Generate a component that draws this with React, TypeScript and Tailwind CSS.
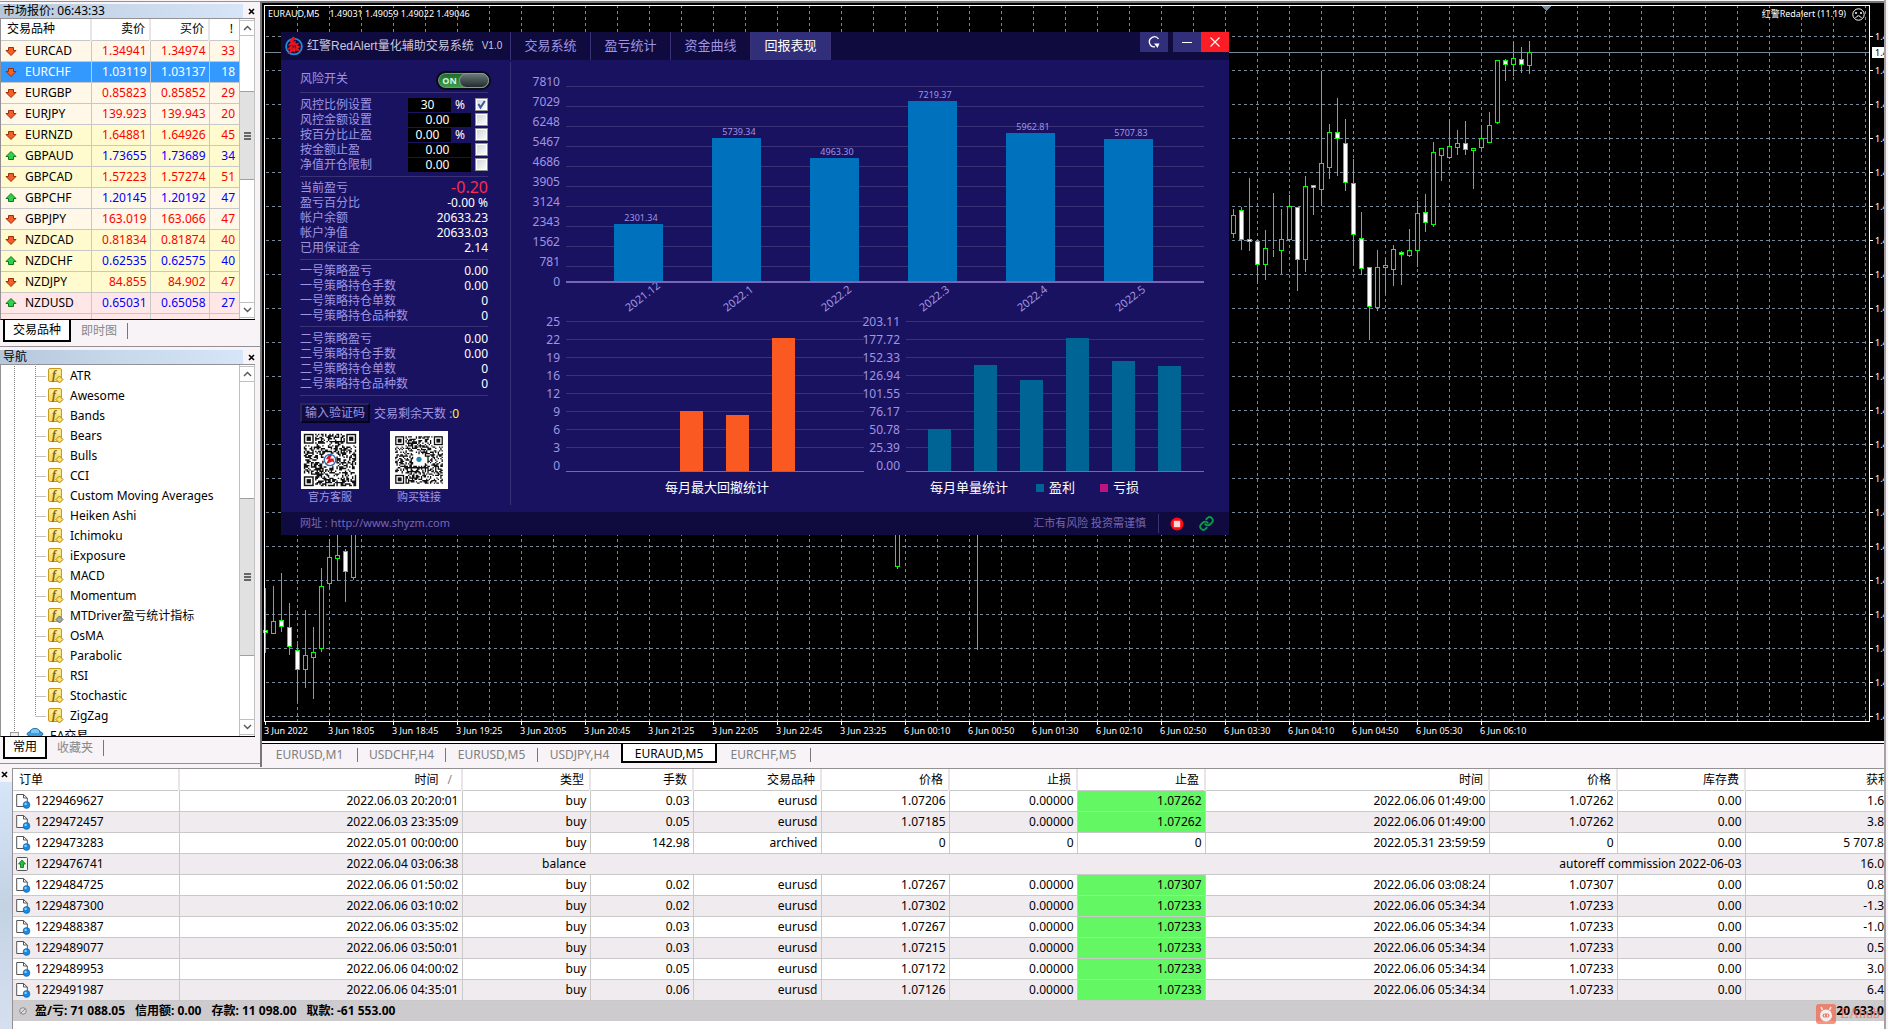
import React, { useState } from "react";

const SANS = "font-['Noto_Sans','Noto_Sans_CJK_SC',sans-serif]";

/* ---------- market watch data ---------- */

type Quote = [string, "up" | "down", string, string, string, string];

const quotes: Quote[] = [
  ["EURCAD", "down", "1.34941", "1.34974", "33", "bg-[#fff7e7]"],
  ["EURCHF", "down", "1.03119", "1.03137", "18", "bg-[#3399ff]"],
  ["EURGBP", "down", "0.85823", "0.85852", "29", "bg-[#fff7e7]"],
  ["EURJPY", "down", "139.923", "139.943", "20", "bg-[#fff7e7]"],
  ["EURNZD", "down", "1.64881", "1.64926", "45", "bg-[#fffbce]"],
  ["GBPAUD", "up", "1.73655", "1.73689", "34", "bg-[#fffbce]"],
  ["GBPCAD", "down", "1.57223", "1.57274", "51", "bg-[#fffbce]"],
  ["GBPCHF", "up", "1.20145", "1.20192", "47", "bg-[#fff7e7]"],
  ["GBPJPY", "down", "163.019", "163.066", "47", "bg-[#fff7e7]"],
  ["NZDCAD", "down", "0.81834", "0.81874", "40", "bg-[#fffbce]"],
  ["NZDCHF", "up", "0.62535", "0.62575", "40", "bg-[#fffbce]"],
  ["NZDJPY", "down", "84.855", "84.902", "47", "bg-[#fffbce]"],
  ["NZDUSD", "up", "0.65031", "0.65058", "27", "bg-[#ffe7e7]"],
  ["USDCAD", "down", "1.25888", "1.25928", "38", "bg-[#ffe7e7]"],
];

const indicators = [
  "ATR", "Awesome", "Bands", "Bears", "Bulls", "CCI", "Custom Moving Averages", "Heiken Ashi", "Ichimoku",
  "iExposure", "MACD", "Momentum", "MTDriver盈亏统计指标", "OsMA", "Parabolic", "RSI", "Stochastic", "ZigZag",
];

/* ---------- price chart data: x, high, body top, body bottom, low, filled ---------- */

type Candle = [number, number, number, number, number, number];

const recent: number[][] = [
  [627, 645, 702, 713, 0], [621, 630, 720, 750, 1], [534, 717, 726, 753, 1], [717, 723, 795, 852, 1],
  [690, 744, 795, 840, 0], [579, 747, 750, 771, 0], [627, 717, 753, 823, 0], [585, 618, 720, 725, 0],
  [621, 621, 780, 873, 1], [528, 558, 780, 816, 0], [555, 555, 564, 645, 1], [213, 489, 570, 617, 0],
  [372, 396, 504, 537, 0], [294, 396, 417, 528, 1], [357, 429, 549, 573, 1], [477, 549, 705, 796, 1],
  [636, 714, 807, 825, 1], [801, 801, 921, 1020, 1], [750, 801, 924, 933, 0], [776, 795, 804, 883, 0],
  [735, 747, 810, 858, 0], [753, 756, 765, 855, 1], [687, 750, 768, 771, 0], [603, 639, 753, 801, 0],
  [582, 636, 669, 696, 1], [426, 456, 675, 681, 0], [444, 444, 468, 543, 0], [357, 438, 474, 477, 0],
  [390, 429, 444, 465, 0], [363, 429, 450, 465, 1], [444, 444, 453, 567, 0], [375, 414, 444, 447, 0],
  [336, 375, 429, 429, 0], [180, 180, 369, 372, 0], [177, 180, 195, 243, 1], [126, 174, 195, 228, 0],
  [141, 177, 195, 219, 1], [123, 156, 198, 222, 0],
];

const early: number[][] = [
  [204, 330, 339, 399, 1], [198, 303, 342, 342, 0], [159, 300, 321, 336, 1], [249, 321, 381, 405, 1],
  [372, 390, 450, 547, 1], [270, 405, 450, 504, 0], [321, 396, 414, 537, 0], [144, 198, 387, 396, 0],
  [57, 111, 192, 207, 0], [0, 105, 117, 182, 0], [87, 93, 156, 246, 1], [0, 0, 174, 180, 0],
];

const scale = (rows: number[][], x0: number, y0: number): Candle[] =>
  rows.map((r, i) => [
    x0 + i * 8,
    Math.round(y0 + r[0] / 3),
    Math.round(y0 + r[1] / 3),
    Math.round(y0 + r[2] / 3),
    Math.round(y0 + r[3] / 3),
    r[4],
  ]);

const candles: Candle[] = [
  ...scale(recent, 1233, 0),
  ...scale(early, 265, 520),
  [897, 500, 510, 567, 569, 0],
  [977, 500, 510, 520, 650, 0],
];

const times = [
  "3 Jun 2022", "3 Jun 18:05", "3 Jun 18:45", "3 Jun 19:25", "3 Jun 20:05", "3 Jun 20:45", "3 Jun 21:25",
  "3 Jun 22:05", "3 Jun 22:45", "3 Jun 23:25", "6 Jun 00:10", "6 Jun 00:50", "6 Jun 01:30", "6 Jun 02:10",
  "6 Jun 02:50", "6 Jun 03:30", "6 Jun 04:10", "6 Jun 04:50", "6 Jun 05:30", "6 Jun 06:10",
];

/* ---------- account history ---------- */

const orders: string[][] = [
  ["1229469627", "2022.06.03 20:20:01", "buy", "0.03", "eurusd", "1.07206", "0.00000", "1.07262", "2022.06.06 01:49:00", "1.07262", "0.00", "1.6"],
  ["1229472457", "2022.06.03 23:35:09", "buy", "0.05", "eurusd", "1.07185", "0.00000", "1.07262", "2022.06.06 01:49:00", "1.07262", "0.00", "3.8"],
  ["1229473283", "2022.05.01 00:00:00", "buy", "142.98", "archived", "0", "0", "0", "2022.05.31 23:59:59", "0", "0.00", "5 707.8"],
  ["1229476741", "2022.06.04 03:06:38", "balance", "autoreff commission 2022-06-03", "16.0"],
  ["1229484725", "2022.06.06 01:50:02", "buy", "0.02", "eurusd", "1.07267", "0.00000", "1.07307", "2022.06.06 03:08:24", "1.07307", "0.00", "0.8"],
  ["1229487300", "2022.06.06 03:10:02", "buy", "0.02", "eurusd", "1.07302", "0.00000", "1.07233", "2022.06.06 05:34:34", "1.07233", "0.00", "-1.3"],
  ["1229488387", "2022.06.06 03:35:02", "buy", "0.03", "eurusd", "1.07267", "0.00000", "1.07233", "2022.06.06 05:34:34", "1.07233", "0.00", "-1.0"],
  ["1229489077", "2022.06.06 03:50:01", "buy", "0.03", "eurusd", "1.07215", "0.00000", "1.07233", "2022.06.06 05:34:34", "1.07233", "0.00", "0.5"],
  ["1229489953", "2022.06.06 04:00:02", "buy", "0.05", "eurusd", "1.07172", "0.00000", "1.07233", "2022.06.06 05:34:34", "1.07233", "0.00", "3.0"],
  ["1229491987", "2022.06.06 04:35:01", "buy", "0.06", "eurusd", "1.07126", "0.00000", "1.07233", "2022.06.06 05:34:34", "1.07233", "0.00", "6.4"],
];

/* ---------- small drawings ---------- */

function QuoteArrow({ dir }: { dir: "up" | "down" }) {
  const up = dir === "up";
  return (
    <svg width="12" height="12" viewBox="0 0 12 12" className="shrink-0">
      <path
        d={up ? "M6 1.5 11 6.5H8.5V9.5H3.5V6.5H1Z" : "M6 10.5 1 5.5H3.5V2.5H8.5V5.5H11Z"}
        fill={up ? "#2fd04a" : "#f2602a"}
        stroke={up ? "#0b7a1c" : "#a02c08"}
        strokeLinejoin="round"
      />
    </svg>
  );
}

function CloseX() {
  return (
    <svg width="7" height="7" viewBox="0 0 7 7">
      <path d="M1 1 6 6M6 1 1 6" stroke="#000" strokeWidth="1.6" />
    </svg>
  );
}

function Chevron({ up }: { up?: boolean }) {
  return (
    <svg width="9" height="6" viewBox="0 0 9 6">
      <path d={up ? "M1 5 4.5 1.5 8 5" : "M1 1 4.5 4.5 8 1"} fill="none" stroke="#555" strokeWidth="1.4" />
    </svg>
  );
}

function IndicatorIcon({ grey }: { grey?: boolean }) {
  return (
    <svg width="16" height="16" viewBox="0 0 16 16" className="shrink-0">
      <rect x="0.5" y="0.5" width="13" height="13" rx="1.5" fill="#f8e070" stroke="#c89a20" />
      <rect x="1.5" y="1.5" width="11" height="5" fill="#fdf0a8" opacity="0.7" />
      <text x="4" y="10.5" fontFamily="Liberation Serif, serif" fontStyle="italic" fontWeight="700" fontSize="12" fill="#8a6410">
        f
      </text>
      <path d="M11.5 8 15 11.5 11.5 15 8 11.5Z" fill={grey ? "#a8a8a8" : "#ffe36a"} stroke={grey ? "#666" : "#b08418"} />
    </svg>
  );
}

function OrderIcon({ balance }: { balance?: boolean }) {
  if (balance) {
    return (
      <svg width="15" height="15" viewBox="0 0 15 15" className="shrink-0">
        <rect x="0.5" y="0.5" width="11" height="13" rx="1" fill="#f4f4f4" stroke="#555" />
        <path d="M6 3 9.5 7H7.5V10.5H4.5V7H2.5Z" fill="#1fc437" stroke="#0b6d18" strokeWidth="0.8" />
      </svg>
    );
  }
  return (
    <svg width="15" height="16" viewBox="0 0 15 16" className="shrink-0">
      <path d="M0.7 1.5H7.5L11.3 5V13.5H0.7Z" fill="#fff" stroke="#555" />
      <path d="M7.5 1.5V5H11.3" fill="none" stroke="#555" />
      <circle cx="10.5" cy="12" r="3.4" fill="#1a8ae0" stroke="#0a5ca8" strokeWidth="0.6" />
      <circle cx="9.6" cy="10.9" r="1.2" fill="#8fd0ff" />
    </svg>
  );
}

function RedLogo() {
  return (
    <svg width="18" height="20" viewBox="0 0 18 20" className="shrink-0">
      <circle cx="9" cy="10.5" r="7.9" fill="none" stroke="#1c8fd8" strokeWidth="1.8" />
      <path
        d="M8 0.5 3.5 6 6 6 2.5 9.8 6 9.6 1 14.2 5.5 13.2 2.5 18.5 8 15.2 9.5 16.8 10.5 14.4 16.5 15.5 13 12.4 15.8 10.6 12.5 9.6 14.5 6.4 10.5 7.4 11 4.4 8 6 10.5 2Z"
        fill="#e8151c"
      />
      <path d="M6.5 9.5 9 10.5 7 12.5M10 9 10.5 12.5" stroke="#3a0d3c" strokeWidth="0.8" fill="none" />
    </svg>
  );
}

function QrCode({ margin, accent, seed }: { margin: number; accent: string; seed: number }) {
  const n = 37;
  const cells: string[] = [];
  let s = seed;
  for (let y = 0; y < n; y++) {
    for (let x = 0; x < n; x++) {
      s = (s * 1103515245 + 12345) & 0x7fffffff;
      const corner = (x < 8 && y < 8) || (x > n - 9 && y < 8) || (x < 8 && y > n - 9);
      const logo = Math.abs(x - 18) < 5 && Math.abs(y - 18) < 5;
      if (!corner && !logo && (s >> 16) % 2 === 0) cells.push(`M${x} ${y}h1v1h-1z`);
    }
  }
  const size = n + margin * 2;
  return (
    <svg width="58" height="58" viewBox={`${-margin} ${-margin} ${size} ${size}`} className="bg-white">
      <path d={cells.join("")} fill="#111" />
      {[[0, 0], [30, 0], [0, 30]].map(([x, y]) => (
        <g key={`${x}-${y}`} fill="none" stroke="#111">
          <rect x={x + 0.5} y={y + 0.5} width="6" height="6" />
          <rect x={x + 2} y={y + 2} width="3" height="3" fill="#111" stroke="none" />
        </g>
      ))}
      <circle cx="18.5" cy="18.5" r="4" fill="#fff" stroke="#2b6cb8" strokeWidth={margin > 3 ? 0 : 1} />
      {margin > 3 ? (
        <circle cx="18.5" cy="18" r="2" fill={accent} />
      ) : (
        <path d="M17.5 15 15.5 18H17.5L15.5 21.5 20 19.5 21.5 20.5 21 17.5 18.5 17.5 20 15Z" fill={accent} />
      )}
    </svg>
  );
}

/* ---------- left side ---------- */

function PanelTitle({ children }: { children: React.ReactNode }) {
  return (
    <div className="flex h-[14px] shrink-0 items-center pr-px">
      <h2 className="flex h-full flex-1 items-center bg-linear-to-r from-[#b5c7da] via-[#c8d9ec] to-[#d6e5f7] pl-[3px] text-xs leading-none text-black">
        {children}
      </h2>
      <button aria-label="关闭" className="flex h-full w-4 items-center justify-center">
        <CloseX />
      </button>
    </div>
  );
}

function ScrollColumn({ thumb }: { thumb: string }) {
  return (
    <div className="flex w-4 shrink-0 flex-col border-x border-[#c0c0c0] bg-white py-px">
      <button aria-label="向上" className="flex h-4 shrink-0 items-center justify-center border-y border-[#c0c0c0]">
        <Chevron up />
      </button>
      <div className="flex-1">
        <div className={`flex flex-col items-center justify-center gap-px border-y border-[#a0a0a0] bg-[#e1e1e1] ${thumb}`}>
          <i className="h-[2px] w-[7px] bg-[#666]" />
          <i className="h-[2px] w-[7px] bg-[#666]" />
          <i className="h-[2px] w-[7px] bg-[#666]" />
        </div>
      </div>
      <button aria-label="向下" className="flex h-4 shrink-0 items-center justify-center border-y border-[#c0c0c0]">
        <Chevron />
      </button>
    </div>
  );
}

function PanelTabs({ active, other }: { active: string; other: string }) {
  return (
    <div className="flex h-[26px] shrink-0 items-start pl-[3px]">
      <button className="h-[22px] border-2 border-t-0 border-black bg-white px-2 text-xs leading-5 text-black">{active}</button>
      <button className="mt-[3px] h-4 border-r border-[#777] px-[10px] text-xs leading-4 text-[#888]">{other}</button>
    </div>
  );
}

function MarketWatch() {
  return (
    <section className="mt-px flex h-[346px] shrink-0 flex-col border-y border-[#949094] pt-[2px]">
      <PanelTitle>市场报价: 06:43:33</PanelTitle>
      <div className="mr-[5px] flex min-h-0 flex-1 overflow-hidden border-t border-b border-l border-t-[#949094] border-b-black border-l-[#949094] bg-white">
        <div className="min-w-0 flex-1 overflow-hidden">
          <table className="w-full table-fixed border-collapse text-right text-xs">
            <colgroup>
              <col className="w-[90px]" />
              <col className="w-[59px]" />
              <col className="w-[59px]" />
              <col />
            </colgroup>
            <thead>
              <tr className="h-[21px] border-b border-[#c8c8c8] leading-5 text-black">
                <th className="border-r-2 border-[#e8e4e8] p-0 pl-[6px] text-left font-normal">交易品种</th>
                <th className="border-r-2 border-[#e8e4e8] p-0 pr-1 font-normal">卖价</th>
                <th className="border-r-2 border-[#e8e4e8] p-0 pr-1 font-normal">买价</th>
                <th className="p-0 pr-[6px] font-normal">!</th>
              </tr>
            </thead>
            <tbody>
              {quotes.map(([name, dir, bid, ask, spread, bg]) => {
                const sel = name === "EURCHF";
                const color = sel ? "text-white" : dir === "up" ? "text-[#0000ff]" : "text-[#ff0000]";
                return (
                  <tr key={name} className={`h-[21px] border-b border-[#c8c8c8] leading-5 ${bg}`}>
                    <td className="border-r border-[#c8c8c8] p-0">
                      <span className={`flex h-5 items-center gap-2 pl-1 ${sel ? "text-white" : "text-black"}`}>
                        <QuoteArrow dir={dir} />
                        {name}
                      </span>
                    </td>
                    <td className={`border-r border-[#c8c8c8] p-0 pr-[3px] ${color}`}>{bid}</td>
                    <td className={`border-r border-[#c8c8c8] p-0 pr-[3px] ${color}`}>{ask}</td>
                    <td className={`p-0 pr-1 ${color}`}>{spread}</td>
                  </tr>
                );
              })}
            </tbody>
          </table>
        </div>
        <ScrollColumn thumb="mt-[55px] h-[89px]" />
      </div>
      <PanelTabs active="交易品种" other="即时图" />
    </section>
  );
}

function Navigator() {
  return (
    <section className="mb-[3px] flex min-h-0 flex-1 flex-col border-b border-[#949094] pt-[3px]">
      <PanelTitle>导航</PanelTitle>
      <div className="mr-[5px] flex min-h-0 flex-1 overflow-hidden border-t border-b border-l border-t-[#949094] border-b-black border-l-[#949094] bg-white">
        <ul className="min-w-0 flex-1 overflow-hidden pt-px text-xs text-black">
          {indicators.map((name, i) => (
            <li key={name} className="flex h-5 items-center">
              <svg width="47" height="20" className="shrink-0">
                <path
                  d={`M13.5 0V20M34.5 0V${i === indicators.length - 1 ? 10 : 20}M34.5 10.5H45`}
                  stroke="#808080"
                  strokeDasharray="1 1"
                  fill="none"
                />
              </svg>
              <IndicatorIcon grey={name.startsWith("MTDriver")} />
              <span className="pl-[6px] whitespace-nowrap">{name}</span>
            </li>
          ))}
          <li className="flex h-5 items-center">
            <svg width="47" height="20" className="shrink-0">
              <path d="M13.5 0V6" stroke="#808080" strokeDasharray="1 1" />
              <rect x="9.5" y="6.5" width="8" height="8" fill="#eee" stroke="#999" />
              <ellipse cx="34" cy="8" rx="8" ry="3" fill="#3aa0e0" stroke="#1c6fae" />
              <path d="M29 7Q29 2.5 34 2.5T39 7" fill="#7cc6f2" stroke="#1c6fae" />
            </svg>
            <span className="pl-[2px]">EA交易</span>
          </li>
        </ul>
        <ScrollColumn thumb="mt-[116px] h-[158px]" />
      </div>
      <PanelTabs active="常用" other="收藏夹" />
    </section>
  );
}

/* ---------- price chart ---------- */

function PriceChart() {
  const cols = Array.from({ length: 50 }, (_, i) => 297 + i * 32);
  const rows = Array.from({ length: 21 }, (_, i) => 36 + i * 34);
  return (
    <svg className="block h-[739px] w-full bg-black" shapeRendering="crispEdges">
      <g transform="translate(-262 -3)">
        <g stroke="#778899" strokeDasharray="3 3">
          {cols.map((x) => (
            <path key={x} d={`M${x + 0.5} 5V721`} />
          ))}
          {rows.map((y) => (
            <path key={y} d={`M266 ${y + 0.5}H1866`} />
          ))}
        </g>
        <path d="M265 52.5H1869" stroke="#778899" />
        <path d="M1542 6h9l-4.5 5z" fill="#778899" />
        {candles.map(([x, high, top, bottom, low, filled]) => (
          <g key={x} stroke="#00ff00">
            <path d={`M${x + 0.5} ${high}V${top}M${x + 0.5} ${bottom}V${low}`} />
            <rect x={x - 1.5} y={top + 0.5} width="4" height={Math.max(0, bottom - top - 1)} fill={filled ? "#fff" : "#000"} />
          </g>
        ))}
        <path d="M264.5 721.5V5.5H1869.5V721.5Z" fill="none" stroke="#fff" />
        <g fontFamily="Noto Sans, sans-serif" fontSize="9" fill="#fff">
          {times.map((t, i) => (
            <g key={t}>
              <path d={`M${265.5 + i * 64} 722v3`} stroke="#fff" />
              <text x={264 + i * 64} y="734">
                {t}
              </text>
            </g>
          ))}
          {rows.map((y) => (
            <g key={y}>
              <path d={`M1870 ${y + 0.5}h3`} stroke="#fff" />
              <text x="1875" y={y + 4}>
                1.4
              </text>
            </g>
          ))}
          <rect x="1872" y="47" width="14" height="11" />
          <text x="1875" y="56" fill="#000">
            1.4
          </text>
        </g>
      </g>
    </svg>
  );
}

/* ---------- strategy window ---------- */

const months = ["2021.12", "2022.1", "2022.2", "2022.3", "2022.4", "2022.5"];
const monthly: [string, number][] = [
  ["2301.34", 224], ["5739.34", 138], ["4963.30", 158], ["7219.37", 101], ["5962.81", 133], ["5707.83", 139],
];

function ReturnChart() {
  const ticks = ["7810", "7029", "6248", "5467", "4686", "3905", "3124", "2343", "1562", "781"];
  return (
    <svg width="718" height="252" viewBox="511 60 718 252" className="block" fontFamily="Noto Sans, sans-serif" fill="#9f95e3">
      {ticks.map((t, i) => (
        <g key={t}>
          <path d={`M566 ${86.5 + i * 20}H1204`} stroke="#3b3276" />
          <text x="560" y={86 + i * 20} fontSize="12" textAnchor="end">
            {t}
          </text>
        </g>
      ))}
      <text x="560" y="286" fontSize="12" textAnchor="end">
        0
      </text>
      {monthly.map(([value, top], i) => (
        <g key={value}>
          <rect x={614 + i * 98} y={top} width="49" height={281 - top} fill="#0071bd" />
          <text x={641 + i * 98} y={top - 3} fontSize="9" textAnchor="middle">
            {value}
          </text>
          <text fontSize="11" transform={`translate(${629 + i * 98} 312) rotate(-38)`}>
            {months[i]}
          </text>
        </g>
      ))}
      <path d="M566 282H1204" stroke="#7765b5" strokeWidth="2" />
    </svg>
  );
}

function SmallChart({ x, width, ticks, bars, color }: { x: number; width: number; ticks: string[]; bars: [number, number][]; color: string }) {
  const left = x === 511 ? 566 : 906;
  return (
    <svg width={width} height="160" viewBox={`${x} 312 ${width} 160`} className="block overflow-visible" fontFamily="Noto Sans, sans-serif" fill="#9f95e3">
      {ticks.map((t, i) => {
        const zero = i === ticks.length - 1;
        return (
          <g key={t}>
            <path d={`M${left} ${zero ? 471.5 : 321.5 + i * 18}h298`} stroke={zero ? "#7765b5" : "#3b3276"} />
            <text x={left - 6} y={326 + i * 18} fontSize="12" textAnchor="end">
              {t}
            </text>
          </g>
        );
      })}
      {bars.map(([bx, top]) => (
        <rect key={bx} x={bx} y={top} width="23" height={471 - top} fill={color} />
      ))}
    </svg>
  );
}

function Field({ id, label, value, narrow, checked }: { id: string; label: string; value: string; narrow?: boolean; checked?: boolean }) {
  const [on, setOn] = useState(!!checked);
  return (
    <div className="flex h-[15px] items-center">
      <label htmlFor={id} className="flex-1 leading-[15px]">
        {label}
      </label>
      <span className="mr-1 flex w-[63px] items-center justify-between text-white">
        <input
          id={id}
          defaultValue={value}
          className={`h-[14px] bg-black pr-1 text-center text-xs leading-[14px] outline-none ${narrow ? "w-[43px]" : "w-[63px]"}`}
        />
        {narrow && <span className="pr-[6px] leading-[14px]">%</span>}
      </span>
      <span className="relative flex size-[13px]">
        <input
          type="checkbox"
          aria-label={`${label}启用`}
          checked={on}
          onChange={() => setOn(!on)}
          className="size-[13px] appearance-none border border-[#8e8f8f] bg-linear-to-br from-[#cfd2d8] to-white ring-1 ring-white ring-inset"
        />
        {on && (
          <svg width="13" height="13" viewBox="0 0 13 13" className="pointer-events-none absolute inset-0">
            <path d="M3.5 6 5.5 9.5 9.8 3" fill="none" stroke="#3a57a5" strokeWidth="2" />
          </svg>
        )}
      </span>
    </div>
  );
}

function Stat({ label, value, red }: { label: string; value: string; red?: boolean }) {
  return (
    <div className="flex h-[15px] items-center justify-between">
      <dt>{label}</dt>
      <dd className={red ? "text-base leading-[15px] text-[#ff2a4c]" : "text-white"}>{value}</dd>
    </div>
  );
}

function StrategySide() {
  return (
    <div className="w-[229px] shrink-0 pr-[22px] pl-[19px] text-xs leading-[15px] text-[#9f95e3]">
      <div className="border-b border-[#3b3276] pt-2">
        <div className="flex h-6 items-start justify-between">
          <span className="pt-[3px]">风险开关</span>
          <button
            role="switch"
            aria-checked="true"
            aria-label="风险开关"
            className="-mr-[3px] mt-[3px] flex h-[19px] w-[55px] items-center rounded-full border-2 border-[#0a0a18] bg-linear-to-b from-[#1c6a2c] to-[#3fa04c] ring-1 ring-[#7b8b86] ring-inset"
          >
            <span className="w-5 pl-[3px] text-[9px] font-bold text-[#d9f3dc]">ON</span>
            <span className="ml-px h-[15px] flex-1 rounded-full border border-[#8b9a98] bg-linear-to-b from-[#6b7a7b] to-[#222c2d]" />
          </button>
        </div>
      </div>
      <div className="border-b border-[#3b3276] py-1">
        <Field id="f1" label="风控比例设置" value="30" narrow checked />
        <Field id="f2" label="风控金额设置" value="0.00" />
        <Field id="f3" label="按百分比止盈" value="0.00" narrow />
        <Field id="f4" label="按金额止盈" value="0.00" />
        <Field id="f5" label="净值开仓限制" value="0.00" />
      </div>
      <dl className="border-b border-[#3b3276] pt-[3px] pb-1">
        <Stat label="当前盈亏" value="-0.20" red />
        <Stat label="盈亏百分比" value="-0.00 %" />
        <Stat label="帐户余额" value="20633.23" />
        <Stat label="帐户净值" value="20633.03" />
        <Stat label="已用保证金" value="2.14" />
      </dl>
      <dl className="border-b border-[#3b3276] py-[3px]">
        <Stat label="一号策略盈亏" value="0.00" />
        <Stat label="一号策略持仓手数" value="0.00" />
        <Stat label="一号策略持仓单数" value="0" />
        <Stat label="一号策略持仓品种数" value="0" />
      </dl>
      <dl className="border-b border-[#3b3276] py-1">
        <Stat label="二号策略盈亏" value="0.00" />
        <Stat label="二号策略持仓手数" value="0.00" />
        <Stat label="二号策略持仓单数" value="0" />
        <Stat label="二号策略持仓品种数" value="0" />
      </dl>
      <div className="mt-[7px] flex items-center gap-1">
        <button className="h-5 border-2 border-t-[#2b2657] border-r-[#07041f] border-b-[#07041f] border-l-[#2b2657] bg-[#110c42] px-[3px] leading-4">
          输入验证码
        </button>
        <span>
          交易剩余天数 :<span className="text-[#ffff00]">0</span>
        </span>
      </div>
      <div className="mt-2 flex gap-[31px] pl-px text-center text-[11px] leading-4">
        <figure>
          <QrCode margin={2} accent="#d81b28" seed={11} />
          <figcaption>官方客服</figcaption>
        </figure>
        <figure>
          <QrCode margin={4} accent="#1b86b8" seed={77} />
          <figcaption>购买链接</figcaption>
        </figure>
      </div>
    </div>
  );
}

function StrategyWindow() {
  return (
    <section className="absolute top-[29px] left-[19px] w-[948px] bg-[#191261]">
      <header className="flex h-7 bg-[#100b3f]">
        <div className="flex w-[229px] shrink-0 items-center gap-1 pl-1 font-['Liberation_Sans','Noto_Sans_CJK_SC',sans-serif] text-xs whitespace-nowrap text-[#c9c8de]">
          <RedLogo />
          <h1>红警RedAlert量化辅助交易系统</h1>
          <span className="pl-1 text-[10px]">V1.0</span>
        </div>
        <nav className="flex text-[13px]">
          {["交易系统", "盈亏统计", "资金曲线", "回报表现"].map((t) => (
            <span key={t} className="flex items-start border-l border-[#3b3276]">
              <button className={t === "回报表现" ? "h-7 w-[79px] bg-[#312f79] text-white" : "h-7 w-[79px] text-[#9f95e3]"}>{t}</button>
            </span>
          ))}
          <span className="border-l border-[#3b3276]" />
        </nav>
        <div className="ml-auto flex">
          <button aria-label="刷新" className="mr-[5px] flex h-5 w-7 items-center justify-center bg-[#312f79]">
            <svg width="14" height="14" viewBox="0 0 14 14">
              <path d="M11.5 4A5 5 0 1 0 8 11.8" fill="none" stroke="#fff" strokeWidth="1.3" />
              <path d="M7 8.5H12.5L10.5 13Z" fill="#fff" />
            </svg>
          </button>
          <button aria-label="最小化" className="flex h-5 w-7 items-center justify-center bg-[#312f79]">
            <i className="h-px w-[10px] bg-white" />
          </button>
          <button aria-label="关闭" className="flex h-5 w-7 items-center justify-center bg-[#ff1d25]">
            <svg width="10" height="10" viewBox="0 0 10 10">
              <path d="M0.5 0.5 9.5 9.5M9.5 0.5 0.5 9.5" stroke="#fff" strokeWidth="1.1" />
            </svg>
          </button>
        </div>
      </header>
      <div className="flex pb-[7px]">
        <StrategySide />
        <div className="mt-[2px] w-px bg-[#3b3276]" />
        <div className="min-w-0 flex-1">
          <ReturnChart />
          <div className="flex">
            <SmallChart
              x={511}
              width={353}
              ticks={["25", "22", "19", "16", "12", "9", "6", "3", "0"]}
              bars={[[680, 411], [726, 415], [772, 338]]}
              color="#fa5a22"
            />
            <SmallChart
              x={864}
              width={365}
              ticks={["203.11", "177.72", "152.33", "126.94", "101.55", "76.17", "50.78", "25.39", "0.00"]}
              bars={[[928, 429], [974, 365], [1020, 380], [1066, 338], [1112, 361], [1158, 366]]}
              color="#006594"
            />
          </div>
          <div className="flex h-8 items-center text-[13px] text-white">
            <h3 className="w-[419px] pl-[154px]">每月最大回撤统计</h3>
            <h3 className="w-[106px]">每月单量统计</h3>
            <span className="flex w-16 items-center gap-[5px]">
              <i className="size-2 bg-[#006594]" />
              盈利
            </span>
            <span className="flex items-center gap-[5px]">
              <i className="size-2 bg-[#be1380]" />
              亏损
            </span>
          </div>
        </div>
      </div>
      <footer className="flex h-[23px] items-center bg-[#100b3f] pl-[19px] text-[11px] text-[#7765b5]">
        <span className="flex-1">
          网址 : <a href="http://www.shyzm.com">http://www.shyzm.com</a>
        </span>
        <span className="mr-3">汇市有风险 投资需谨慎</span>
        <span className="h-[19px] w-px bg-[#3b3276]" />
        <button aria-label="停止" className="ml-[11px]">
          <svg width="14" height="14" viewBox="0 0 14 14">
            <circle cx="7" cy="7" r="6.5" fill="#ff0a12" />
            <rect x="3.8" y="3.8" width="6.4" height="6.4" fill="#ffd5d5" />
          </svg>
        </button>
        <button aria-label="链接" className="mr-[15px] ml-[15px]">
          <svg width="15" height="15" viewBox="0 0 24 24" fill="none" stroke="#0a9a4a" strokeWidth="3" strokeLinecap="round">
            <path d="M10 13a5 5 0 0 0 7.54.54l3-3a5 5 0 0 0-7.07-7.07l-1.72 1.71" />
            <path d="M14 11a5 5 0 0 0-7.54-.54l-3 3a5 5 0 0 0 7.07 7.07l1.71-1.71" />
          </svg>
        </button>
      </footer>
    </section>
  );
}

function ChartArea() {
  return (
    <main className="flex min-w-0 flex-1 flex-col border-t-2 border-l-2 border-[#777]">
      <div className="relative h-[739px] overflow-hidden">
        <PriceChart />
        <p className="absolute top-[3px] left-[6px] flex gap-[10px] text-[9px] leading-4 text-white">
          <span>EURAUD,M5</span>
          <span>1.49031 1.49059 1.49022 1.49046</span>
        </p>
        <p className="absolute top-[3px] right-[19px] flex items-center gap-[6px] text-[9px] leading-4 text-white">
          红警Redalert (11.19)
          <svg width="13" height="13" viewBox="0 0 13 13" fill="none" stroke="#fff">
            <circle cx="6.5" cy="6.5" r="5.7" />
            <path d="M3.5 10Q6.5 5.5 9.5 10" />
            <path d="M4 4v2M9 4v2" strokeWidth="1.5" />
          </svg>
        </p>
        <StrategyWindow />
      </div>
      <div className="mt-px h-px bg-white" />
      <nav className="flex h-6 items-start border-t border-black text-xs text-[#808080]">
        {[
          ["EURUSD,M1", "w-[96px]"],
          ["USDCHF,H4", "w-[88px]"],
          ["EURUSD,M5", "w-[92px]"],
          ["USDJPY,H4", "w-[83px]"],
          ["EURAUD,M5", ""],
          ["EURCHF,M5", "w-[94px]"],
        ].map(([t, w]) =>
          t === "EURAUD,M5" ? (
            <button key={t} className="h-[19px] w-[96px] border-2 border-t-0 border-black bg-white leading-[19px] text-black">
              {t}
            </button>
          ) : (
            <button key={t} className={`mt-1 h-[14px] leading-[14px] ${t === "USDJPY,H4" ? "" : "border-r border-[#777]"} ${w}`}>
              {t}
            </button>
          ),
        )}
      </nav>
    </main>
  );
}

/* ---------- terminal ---------- */

function Terminal() {
  const cell = "border-r border-[#c9c9c9] p-0 pr-[3px]";
  const head = "border-r-2 border-[#e8e4e8] p-0 pt-px pr-[5px] font-normal";
  return (
    <section className="flex">
      <div className="flex w-3 shrink-0 flex-col">
        <button aria-label="关闭终端" className="flex h-[14px] w-2 items-center justify-center">
          <CloseX />
        </button>
        <div className="flex-1 bg-linear-to-b from-[#d6e5f7] via-[#c3d3e4] to-[#d6dff0]" />
      </div>
      <div className="relative min-w-0 flex-1 overflow-hidden border-t border-l border-[#949094] bg-white pb-2">
        <table className="w-full table-fixed border-collapse text-right text-xs whitespace-nowrap text-black">
          <colgroup>
            <col className="w-[166px]" />
            <col className="w-[283px]" />
            <col className="w-[128px]" />
            <col className="w-[103px]" />
            <col className="w-[128px]" />
            <col className="w-[128px]" />
            <col className="w-[128px]" />
            <col className="w-[128px]" />
            <col className="w-[284px]" />
            <col className="w-[128px]" />
            <col className="w-[128px]" />
            <col />
          </colgroup>
          <thead>
            <tr className="h-[22px] border-b border-[#c9c9c9]">
              <th className="border-r-2 border-[#e8e4e8] p-0 pt-px pl-[6px] text-left font-normal">订单</th>
              <th className={head}>
                时间 <span className="pr-1 pl-[6px] text-[#888]">/</span>
              </th>
              {["类型", "手数", "交易品种", "价格", "止损", "止盈"].map((t) => (
                <th key={t} className={head}>
                  {t}
                </th>
              ))}
              <th className={head}>时间</th>
              <th className={head}>价格</th>
              <th className={head}>库存费</th>
              <th className="overflow-hidden p-0 pt-px font-normal">
                <span className="-mr-[6px]">获利</span>
              </th>
            </tr>
          </thead>
          <tbody>
            {orders.map((o, i) => {
              const balance = o.length === 5;
              return (
                <tr key={o[0]} className={`h-[21px] border-b border-[#c9c9c9] leading-5 ${i % 2 ? "bg-[#efebef]" : "bg-white"}`}>
                  <td className="border-r border-[#c9c9c9] p-0">
                    <span className="flex h-5 items-center gap-1 pl-[3px]">
                      <OrderIcon balance={balance} />
                      {o[0]}
                    </span>
                  </td>
                  <td className={cell}>{o[1]}</td>
                  <td className={balance ? "p-0 pr-1" : cell}>{o[2]}</td>
                  {balance ? (
                    <td colSpan={8} className={cell}>
                      {o[3]}
                    </td>
                  ) : (
                    o.slice(3, 11).map((v, k) => (
                      <td key={k} className={k === 4 && v !== "0" ? "border-r border-[#c9c9c9] bg-[#63f763] p-0 pr-[3px]" : cell}>
                        {v}
                      </td>
                    ))
                  )}
                  <td className="p-0">{o[o.length - 1]}</td>
                </tr>
              );
            })}
          </tbody>
          <tfoot>
            <tr className="h-5 bg-[#cecbce] font-bold">
              <td colSpan={11} className="p-0 text-left">
                <span className="flex h-5 items-center gap-2 pl-[6px]">
                  <svg width="8" height="10" viewBox="0 0 8 10">
                    <circle cx="4" cy="5" r="3.3" fill="#ddd" stroke="#888" />
                    <path d="M2 7 6 3" stroke="#888" />
                  </svg>
                  <span className="flex gap-[10px]">
                    <span>盈/亏: 71 088.05</span>
                    <span>信用额: 0.00</span>
                    <span>存款: 11 098.00</span>
                    <span>取款: -61 553.00</span>
                  </span>
                </span>
              </td>
              <td className="p-0">20 633.0</td>
            </tr>
          </tfoot>
        </table>
        <div className="absolute right-1 bottom-[5px] flex items-center gap-1 text-[#f4664a] opacity-70">
          <svg width="20" height="20" viewBox="0 0 20 20">
            <rect width="20" height="20" rx="3" fill="#f4664a" />
            <circle cx="10" cy="11.5" r="6" fill="#fff" />
            <path d="M6.5 6 5 3M13.5 6 15 3" stroke="#fff" strokeWidth="1.6" />
            <rect x="6.5" y="9.5" width="7" height="4" rx="2" fill="#f4664a" />
            <path d="M8.5 10.5v2M11.5 10.5v2" stroke="#fff" />
          </svg>
          <span className="font-['Liberation_Serif',serif] text-sm leading-none">EAhub</span>
        </div>
      </div>
    </section>
  );
}

export default function App() {
  return (
    <div className={`flex h-screen overflow-hidden bg-[#f7f3f7] ${SANS}`}>
      <div className="flex min-w-0 flex-1 flex-col border-r-2 border-[#a5a2a5]">
        <div className="flex min-h-0 flex-1 pb-px">
          <aside className="flex w-[260px] shrink-0 flex-col">
            <MarketWatch />
            <Navigator />
          </aside>
          <div className="flex min-w-0 flex-1 pt-px">
            <ChartArea />
          </div>
        </div>
        <Terminal />
      </div>
      <div className="w-[2px] shrink-0" />
    </div>
  );
}
